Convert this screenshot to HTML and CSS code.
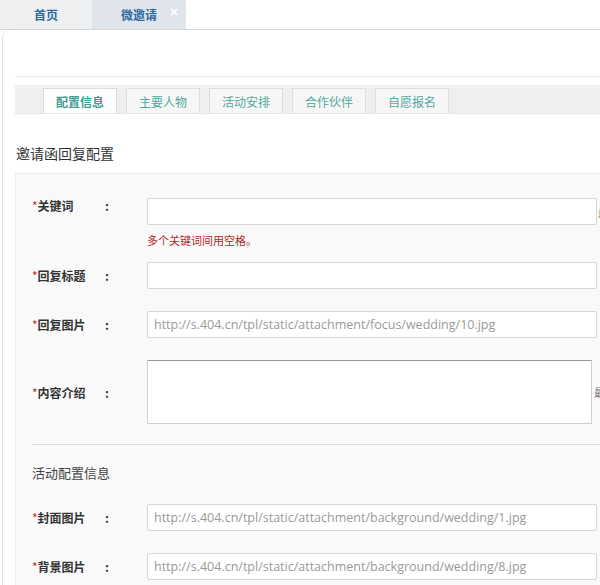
FILE: index.html
```html
<!DOCTYPE html>
<html lang="zh-CN">
<head>
<meta charset="utf-8">
<title>微邀请</title>
<link rel="stylesheet" href="styles.css">
</head>
<body>
<div class="topbar">
  <div class="ttab">首页</div>
  <div class="ttab cur">微邀请<span class="close">×</span></div>
</div>
<div class="panel">
  <div class="strip"></div>
  <div class="subtabs">
    <div class="stab on">配置信息</div>
    <div class="stab">主要人物</div>
    <div class="stab">活动安排</div>
    <div class="stab">合作伙伴</div>
    <div class="stab">自愿报名</div>
  </div>
  <h2 class="title">邀请函回复配置</h2>
  <div class="formbox">
    <div class="row r1">
      <label class="lab"><i>*</i>关键词</label><span class="colon">:</span>
      <div class="field"><input class="inp" type="text"><span class="tip">最</span></div>
    </div>
    <div class="hint">多个关键词间用空格。</div>
    <div class="row r2">
      <label class="lab"><i>*</i>回复标题</label><span class="colon">:</span>
      <div class="field"><input class="inp" type="text"></div>
    </div>
    <div class="row r3">
      <label class="lab"><i>*</i>回复图片</label><span class="colon">:</span>
      <div class="field"><input class="inp" type="text" placeholder="http://s.404.cn/tpl/static/attachment/focus/wedding/10.jpg"></div>
    </div>
    <div class="row r4">
      <label class="lab"><i>*</i>内容介绍</label><span class="colon">:</span>
      <div class="field"><textarea class="area"></textarea><span class="tip2">最</span></div>
    </div>
    <hr class="sep">
    <h3 class="sub">活动配置信息</h3>
    <div class="row r5">
      <label class="lab"><i>*</i>封面图片</label><span class="colon">:</span>
      <div class="field"><input class="inp" type="text" placeholder="http://s.404.cn/tpl/static/attachment/background/wedding/1.jpg"></div>
    </div>
    <div class="row r6">
      <label class="lab"><i>*</i>背景图片</label><span class="colon">:</span>
      <div class="field"><input class="inp" type="text" placeholder="http://s.404.cn/tpl/static/attachment/background/wedding/8.jpg"></div>
    </div>
  </div>
</div>
</body>
</html>
```
FILE: styles.css
```css
html, body {
  margin: 0;
  padding: 0;
  background: #fff;
  overflow: hidden;
}
body {
  width: 600px;
  height: 585px;
  font-family: "Noto Sans CJK SC", "Noto Sans", sans-serif;
  font-size: 12px;
  color: #333;
}
.topbar {
  display: flex;
  height: 29px;
  border-bottom: 1px solid #d4d6d8;
  background: #fff;
}
.ttab {
  width: 92px;
  display: flex;
  align-items: center;
  justify-content: center;
  background: #eef0f2;
  color: #2d6aa0;
  font-size: 12px;
  font-weight: bold;
  border-right: 1px solid #e2e5e8;
  position: relative;
}
.ttab.cur {
  background: #dfe5ea;
  width: 92px;
}
.close {
  position: absolute;
  right: 6px;
  top: 5px;
  color: #fff;
  font-size: 12px;
  font-family: "DejaVu Sans", sans-serif;
}
.panel {
  margin-left: 2px;
  border-left: 1px solid #e3e3e3;
  border-top-left-radius: 8px;
  padding-left: 12px;
  padding-top: 46px;
}
.strip {
  height: 1px;
  background: #eeeeee;
}
.subtabs {
  margin-top: 8px;
  height: 28px;
  display: flex;
  gap: 9px;
  padding-left: 28px;
  background: #efefef;
  border-bottom: 1px solid #e6e6e6;
}
.stab {
  width: 72px;
  margin-top: 3px;
  display: flex;
  align-items: center;
  justify-content: center;
  background: #f6f6f6;
  border: 1px solid #dedede;
  border-bottom: none;
  color: #52aaa0;
  font-size: 12px;
}
.stab.on {
  background: #fff;
  font-weight: bold;
  color: #3e9c90;
}
.title {
  margin: 0;
  padding-top: 29px;
  padding-left: 1px;
  height: 30px;
  font-size: 14px;
  font-weight: normal;
  color: #333;
  line-height: 20px;
}
.formbox {
  background: #f9f9f9;
  border-top: 1px solid #ececec;
  border-left: 1px solid #ededed;
  padding-top: 24px;
  padding-left: 16px;
  height: 420px;
}
.row {
  display: flex;
  align-items: center;
  height: 27px;
}
.lab {
  width: 73px;
  font-weight: bold;
  color: #333;
  font-size: 12px;
}
.lab i {
  font-style: normal;
  color: #c03030;
  font-weight: normal;
}
.colon {
  width: 42px;
  font-weight: bold;
}
.field {
  flex: 1;
  display: flex;
  align-items: center;
  height: 100%;
  overflow: hidden;
}
.inp {
  box-sizing: border-box;
  width: 450px;
  flex: none;
  height: 27px;
  margin: 0;
  border: 1px solid #d3d7da;
  border-radius: 2px;
  background: #fff;
  padding: 0 6px;
  font-family: "Open Sans", sans-serif;
  font-size: 12.5px;
  color: #555;
}
.inp::placeholder {
  color: #9a9a9a;
}
.r1 .lab { position: relative; top: -6px; }
.r1 .colon { position: relative; top: -6px; }
.tip, .tip2 {
  flex: none;
  color: #777;
  font-size: 11px;
  margin-left: 1px;
}
.hint {
  padding-left: 115px;
  margin-top: 8px;
  height: 14px;
  line-height: 14px;
  color: #b22a2a;
  font-size: 11px;
}
.r2 { margin-top: 15px; }
.r3 { margin-top: 22px; }
.r4 { margin-top: 22px; height: 64px; }
.area {
  box-sizing: border-box;
  width: 445px;
  flex: none;
  height: 64px;
  margin: 0;
  border: 1px solid #cfcfcf;
  border-top-color: #999;
  border-radius: 0;
  background: #fff;
  resize: none;
}
.tip2 { margin-left: 2px; }
.sep {
  margin: 20px 0 0 0;
  border: none;
  border-top: 1px solid #dcdcdc;
  height: 0;
}
.sub {
  margin: 0;
  padding-top: 18px;
  height: 40px;
  box-sizing: border-box;
  font-size: 13px;
  font-weight: normal;
  color: #444;
  line-height: 20px;
}
.r5 { margin-top: 19px; }
.r6 { margin-top: 22px; }
```
